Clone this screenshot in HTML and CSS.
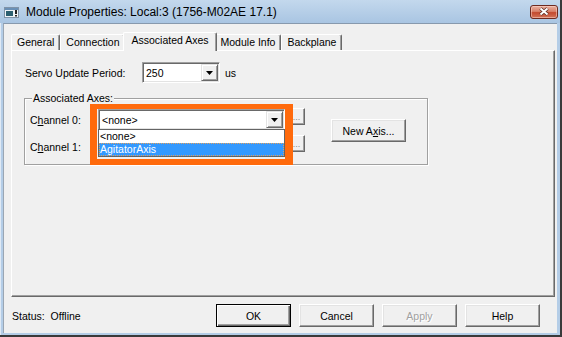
FILE: index.html
```html
<!DOCTYPE html>
<html lang="en">
<head>
    <meta charset="UTF-8">
    <meta name="viewport" content="width=device-width, initial-scale=1.0">
    <title>Module Properties: Local:3</title>
    <link rel="stylesheet" href="styles.css">
</head>
<body>
    <!-- dialog window -->
    <div class="window">
        <!-- title bar -->
        <div class="titlebar">
            <svg class="app-icon" width="15" height="11" viewBox="0 0 15 11">
                <rect x="0.5" y="0.5" width="14" height="10" fill="#eef2f6" stroke="#7f93a8"/>
                <rect x="1" y="1" width="13" height="2" fill="#6a90b6"/>
                <rect x="2" y="4" width="7" height="5" fill="#2b5f70"/>
                <rect x="11" y="3" width="2" height="4" fill="#222"/>
                <rect x="11" y="8" width="2" height="1.5" fill="#222"/>
            </svg>
            <span class="title">Module Properties: Local:3 (1756-M02AE 17.1)</span>
            <button class="close" title="Close">
                <svg width="12" height="9" viewBox="0 0 12 9">
                    <path d="M2.5 1.5 L9.5 7.5 M9.5 1.5 L2.5 7.5" stroke="#5c2b22" stroke-width="3.6"/>
                    <path d="M2.5 1.5 L9.5 7.5 M9.5 1.5 L2.5 7.5" stroke="#fff" stroke-width="2"/>
                </svg>
            </button>
        </div>

        <div class="client">
            <!-- tabs -->
            <div class="tabs">
                <div class="tab">General</div>
                <div class="tab">Connection</div>
                <div class="tab active">Associated Axes</div>
                <div class="tab">Module Info</div>
                <div class="tab">Backplane</div>
            </div>

            <div class="panel">
                <div class="servo">
                    <span class="servo-label">Servo Update Period:</span>
                    <div class="combo combo-small">
                        <span class="combo-text">250</span>
                        <span class="combo-btn">
                            <svg width="7" height="4" viewBox="0 0 7 4"><polygon points="0,0 7,0 3.5,4" fill="#000"/></svg>
                        </span>
                    </div>
                    <span class="units">us</span>
                </div>

                <div class="group">
                    <span class="group-label">Associated Axes:</span>
                    <div class="channels">
                        <div class="channel">
                            <span class="channel-label">C<u>h</u>annel 0:</span>
                            <div class="combo combo-wide">
                                <span class="combo-text">&lt;none&gt;</span>
                                <span class="combo-btn">
                                    <svg width="7" height="4" viewBox="0 0 7 4"><polygon points="0,0 7,0 3.5,4" fill="#000"/></svg>
                                </span>
                                <!-- open list -->
                                <ul class="dropdown">
                                    <li>&lt;none&gt;</li>
                                    <li class="selected">AgitatorAxis</li>
                                </ul>
                            </div>
                            <button class="browse">...</button>
                        </div>
                        <div class="channel">
                            <span class="channel-label">C<u>h</u>annel 1:</span>
                            <!-- covered by the open list above -->
                            <div class="combo combo-wide">
                                <span class="combo-text"></span>
                                <span class="combo-btn">
                                    <svg width="7" height="4" viewBox="0 0 7 4"><polygon points="0,0 7,0 3.5,4" fill="#000"/></svg>
                                </span>
                            </div>
                            <button class="browse">...</button>
                        </div>
                    </div>
                    <button class="btn new-axis">New A<u>x</u>is...</button>
                    <!-- orange callout round the open list -->
                    <div class="highlight"></div>
                </div>
            </div>

            <!-- status and dialog buttons -->
            <div class="footer">
                <span class="status">Status:&nbsp; Offline</span>
                <div class="actions">
                    <button class="btn default">OK</button>
                    <button class="btn">Cancel</button>
                    <button class="btn" disabled>Apply</button>
                    <button class="btn">Help</button>
                </div>
            </div>
        </div>
    </div>
</body>
</html>
```

FILE: styles.css
```css
body {
    margin: 0;
    font-family: "Liberation Sans", Arial, sans-serif;
    font-size: 10.5px;
    color: #000;
}

/* window frame */
.window {
    width: 562px;
    height: 337px;
    box-sizing: border-box;
    display: flex;
    flex-direction: column;
    padding: 0 3px 2px;
    background: #b4cde7;
    border-right: 2px solid #3a3a3a;
    border-bottom: 2px solid #3a3a3a;
    box-shadow: inset 1px 0 #dfe9f4;
}

.titlebar {
    height: 23px;
    margin: 0 -3px;
    padding-left: 3px;
    display: flex;
    align-items: center;
    background: linear-gradient(#c3d8ed, #a9c5e2);
}

.app-icon {
    margin: 1px 7px 0 1px;
}

.title {
    font-size: 12px;
    padding-top: 1px;
}

.close {
    margin: 0 2px 0 auto;
    width: 28px;
    height: 14px;
    padding: 0;
    display: flex;
    align-items: center;
    justify-content: center;
    border: 1px solid #6e2a20;
    border-radius: 3px;
    background: linear-gradient(#eab0a0, #d8826b 45%, #c44a2f 55%, #d2745a);
    box-shadow: inset 0 0 0 1px rgba(255, 220, 210, 0.5);
}

.client {
    flex: 1;
    display: flex;
    flex-direction: column;
    background: #f0f0f0;
    border-top: 1px solid #8799ad;
    border-left: 1px solid #9aa6b3;
    padding: 8px 2px 0 7px;
}

/* tabs */
.tabs {
    display: flex;
    align-items: flex-end;
    height: 18px;
    position: relative;
    z-index: 1;
}

.tab {
    height: 16px;
    box-sizing: border-box;
    padding: 0 5px;
    line-height: 15px;
    border: 1px solid;
    border-color: #fff #696969 transparent #fff;
    border-bottom: none;
    border-radius: 2px 2px 0 0;
    box-shadow: inset -1px 0 #a0a0a0;
    white-space: nowrap;
}

.tab.active {
    height: 19px;
    margin: 0 -2px -1px;
    padding: 0 7px;
    line-height: 14px;
    background: #f0f0f0;
    position: relative;
}

.panel {
    height: 247px;
    box-sizing: border-box;
    border: 1px solid;
    border-color: #fff #696969 #696969 #fff;
    box-shadow: inset -1px -1px #a0a0a0;
    background: #f0f0f0;
}

/* servo row */
.servo {
    display: flex;
    align-items: center;
    margin: 11px 0 0 13px;
}

.servo-label {
    width: 117px;
}

.units {
    margin-left: 5px;
}

/* sunken combo box */
.combo {
    position: relative;
    height: 21px;
    box-sizing: border-box;
    padding: 1px;
    display: flex;
    align-items: center;
    background: #fff;
    border: 1px solid;
    border-color: #a0a0a0 #fff #fff #a0a0a0;
    box-shadow: inset 1px 1px #696969, inset -1px -1px #e3e3e3;
}

.combo-small {
    width: 78px;
}

.combo-wide {
    width: 187px;
}

.combo-text {
    flex: 1;
    padding-left: 2px;
}

.combo-btn {
    width: 17px;
    height: 17px;
    box-sizing: border-box;
    display: flex;
    align-items: center;
    justify-content: center;
    background: #f0f0f0;
    border: 1px solid;
    border-color: #e3e3e3 #696969 #696969 #e3e3e3;
    box-shadow: inset 1px 1px #fff, inset -1px -1px #a0a0a0;
}

/* group box */
.group {
    position: relative;
    display: flex;
    align-items: flex-start;
    width: 404px;
    height: 67px;
    box-sizing: border-box;
    margin: 15px 0 0 12px;
    padding: 10px 0 0 5px;
    border: 1px solid #a0a0a0;
    box-shadow: inset 1px 1px #fff, 1px 1px #fff;
}

.group-label {
    position: absolute;
    top: -7px;
    left: 7px;
    padding: 0 1px;
    background: #f0f0f0;
}

.channel {
    display: flex;
    align-items: center;
    height: 21px;
}

.channel + .channel {
    margin-top: 6px;
}

.channel-label {
    width: 68px;
}

.browse {
    width: 17px;
    height: 17px;
    align-self: flex-start;
    margin: -1px 0 0 3px;
    padding: 0 0 2px;
    display: flex;
    align-items: flex-end;
    justify-content: center;
    font: inherit;
    font-size: 9px;
    line-height: 9px;
    color: #8a8a8a;
    background: #f0f0f0;
    border: 1px solid;
    border-color: #fff #696969 #696969 #fff;
    box-shadow: inset -1px -1px #a0a0a0;
}

.dropdown {
    position: absolute;
    top: 19px;
    left: -1px;
    z-index: 3;
    width: 187px;
    height: 28px;
    box-sizing: border-box;
    margin: 0;
    padding: 0;
    list-style: none;
    background: #fff;
    border: 1px solid #646464;
}

.dropdown li {
    height: 13px;
    line-height: 13px;
    padding-left: 1px;
}

.dropdown .selected {
    background: #3399ff;
    color: #fff;
    outline: 1px dotted #e0a060;
    outline-offset: -1px;
}

.highlight {
    position: absolute;
    left: 65px;
    top: 5px;
    width: 203px;
    height: 61px;
    box-sizing: border-box;
    z-index: 4;
    border: solid #ff6a0c;
    border-width: 5px 8px 6px 7px;
}

/* raised buttons */
.btn {
    width: 75px;
    height: 23px;
    box-sizing: border-box;
    padding: 0;
    font: inherit;
    color: #000;
    background: #f0f0f0;
    border: 1px solid;
    border-color: #fff #696969 #696969 #fff;
    box-shadow: inset -1px -1px #a0a0a0, inset 1px 1px #e3e3e3;
}

.btn.default {
    border-color: #000;
    box-shadow: inset 1px 1px #fff, inset -1px -1px #696969, inset -2px -2px #a0a0a0;
}

.btn:disabled {
    color: #a0a0a0;
    text-shadow: 1px 1px #fff;
}

.new-axis {
    margin: 10px 0 0 26px;
}

.footer {
    display: flex;
    align-items: center;
    margin-top: 7px;
    height: 23px;
    padding-left: 1px;
}

.actions {
    display: flex;
    gap: 8px;
    margin: 0 15px 0 auto;
}
```
